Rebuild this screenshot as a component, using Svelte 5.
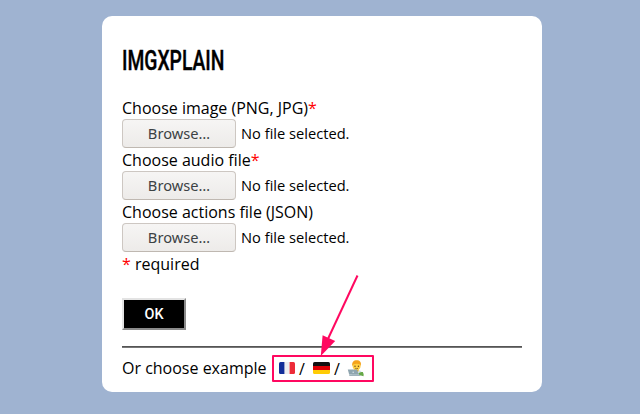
<script>
  const fields = [
    { label: 'Choose image (PNG, JPG)', required: true },
    { label: 'Choose audio file', required: true },
    { label: 'Choose actions file (JSON)', required: false }
  ];
</script>

<main class="card">
  <h1><span>IMGXPLAIN</span></h1>
  <form onsubmit={(e) => e.preventDefault()}>
    {#each fields as field}
      <div class="field">
        <div class="label">{field.label}{#if field.required}<span class="star">*</span>{/if}</div>
        <div class="picker">
          <button type="button" class="browse">Browse…</button>
          <span class="status">No file selected.</span>
        </div>
      </div>
    {/each}
    <div class="note"><span class="star">*</span> required</div>
    <button type="submit" class="ok">OK</button>
  </form>
  <div class="rule"></div>
  <div class="examples">
    <span class="prompt">Or choose example</span>
    <div class="frame">
      <svg class="flag" width="16" height="12" viewBox="0 0 16 12">
        <defs><clipPath id="round"><rect width="16" height="12" rx="1.5" /></clipPath></defs>
        <g clip-path="url(#round)">
          <rect width="6" height="12" fill="#132e99" />
          <rect x="5.4" width="5.2" height="12" fill="#eeeef0" />
          <rect x="10.6" width="5.4" height="12" fill="#ed2b39" />
        </g>
      </svg>
      <span class="slash">/</span>
      <svg class="flag" width="17" height="12" viewBox="0 0 16 12" preserveAspectRatio="none">
        <g clip-path="url(#round)">
          <rect width="16" height="4" fill="#111" />
          <rect y="4" width="16" height="4" fill="#dd0005" />
          <rect y="8" width="16" height="4" fill="#ffcc05" />
        </g>
      </svg>
      <span class="slash second">/</span>
      <svg class="person" width="18" height="17" viewBox="0 0 18 17">
        <path d="M4 12 Q5 10.4 7.5 10.2 H12 Q14.8 10.4 15.4 15 H5Z" fill="#d3e0e6" />
        <path d="M7.5 9h4v2.3q-2 1-4 0Z" fill="#f2a900" />
        <ellipse cx="9.6" cy="5.9" rx="4" ry="4.5" fill="#ffd043" />
        <path d="M5.3 6.2 C4.7 2.2 6.6 .3 9.7 .3 C12.8 .3 14.6 2.3 13.9 6.2 L13.2 4.5 Q9.8 3 6.2 4.5Z" fill="#f5a31c" />
        <circle cx="8" cy="6.2" r=".7" fill="#704214" />
        <circle cx="11.4" cy="6.2" r=".7" fill="#704214" />
        <path d="M8.2 8.3 Q9.7 9.2 11.1 8.3" stroke="#8b5a16" stroke-width=".8" fill="none" />
        <path d="M.8 9.6 H10.2 L11.6 14.6 H2.2Z" fill="#8fa5af" />
        <path d="M2 14.4 H13.5 V16 H2.4Z" fill="#9fb2bb" />
        <circle cx="6.2" cy="12.2" r=".8" fill="#d5e1e6" />
        <path d="M11.3 13.6 Q13.2 11.4 15.8 12.1 Q17 14 16.6 16.2 Q12.5 16 11.3 13.6Z" fill="#66a847" />
      </svg>
      <svg class="arrow" width="48" height="86" viewBox="0 0 48 86">
        <path d="M43.5 5.5 L13 71" stroke="#ff0860" stroke-width="2" />
        <path d="M6.8 86 L8.6 65.2 L21.2 71Z" fill="#ff0860" />
      </svg>
    </div>
  </div>
</main>

<style>
  :global(body) { margin: 0; background: #9fb3d1; }
  :global(#app) { display: flow-root; }
  .card {
    box-sizing: border-box;
    width: 440px;
    height: 376px;
    margin: 16px 0 0 102px;
    padding: 29px 20px 0;
    background: #fff;
    border-radius: 10px;
    font: 16px/24px "Open Sans", sans-serif;
    color: #000;
  }
  h1 { margin: 0; height: 51px; font: 500 28px/32px Roboto, sans-serif; }
  h1 span { display: inline-block; transform: scaleX(.688); transform-origin: 0 0; -webkit-text-stroke: .4px #000; }
  .field { height: 52px; }
  .label { height: 23px; line-height: 24px; white-space: nowrap; }
  .star { color: #f00; }
  .picker { display: flex; align-items: center; height: 29px; gap: 5px; }
  .browse {
    box-sizing: border-box;
    width: 114px;
    height: 29px;
    padding: 0;
    border: 1px solid #cdc7c2;
    border-bottom-color: #bfb8b1;
    border-radius: 4px;
    background: linear-gradient(#f6f5f4, #edebe9);
    color: #3c4244;
    font: 14.67px/27px "Noto Sans", sans-serif;
  }
  .status { padding-bottom: 2px; font-size: 14.67px; white-space: nowrap; }
  .note { height: 46px; }
  .ok {
    display: block;
    box-sizing: border-box;
    width: 64px;
    height: 32px;
    padding: 1px 0 0;
    border: 2px solid;
    border-color: #e3e3e3 #8b8b8b #8b8b8b #e3e3e3;
    background: #000;
    color: #fff;
    font: 500 14.4px/27px Roboto, sans-serif;
  }
  .rule { height: 2px; margin-top: 16px; background: linear-gradient(#555 50%, #777 50%); }
  .examples { display: flex; margin-top: 7px; height: 27px; }
  .prompt { width: 150px; line-height: 27px; white-space: nowrap; }
  .frame {
    position: relative;
    box-sizing: border-box;
    display: flex;
    align-items: center;
    width: 102px;
    height: 27px;
    padding-left: 5px;
    border: 2px solid #ff0860;
    border-radius: 1px;
  }
  .flag { margin-bottom: 1px; }
  .slash { width: 14px; padding-left: 4px; }
  .slash.second { width: 13px; }
  .person { margin-bottom: 1px; }
  .arrow { position: absolute; left: 40px; top: -87px; }
</style>
